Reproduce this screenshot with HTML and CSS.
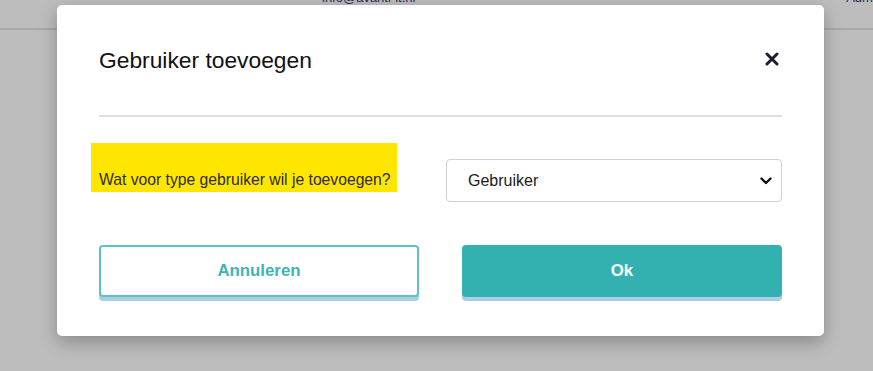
FILE: index.html
```html
<!DOCTYPE html>
<html>
<head>
    <title>Gebruiker toevoegen</title>
    <meta charset="utf-8" />
    <link rel="stylesheet" href="styles.css">
</head>
<body>
    <div class="topbar">
        <span class="topbar-mail">info@avanti-it.nl</span>
        <span class="topbar-role">Admin</span>
    </div>

    <div class="modal">
        <div class="modal-head">
            <h2 class="modal-title">Gebruiker toevoegen</h2>
            <button class="closebtn" type="button">
                <svg width="14" height="14" viewBox="0 0 14 14">
                    <path d="M2 2 L12 12 M12 2 L2 12" stroke="#1b1c36" stroke-width="3" stroke-linecap="round" fill="none"/>
                </svg>
            </button>
        </div>
        <div class="divider"></div>

        <div class="row">
            <label class="question" for="typesel">Wat voor type gebruiker wil je toevoegen?</label>
            <div class="selectwrap">
                <select id="typesel" class="typeselect">
                    <option>Gebruiker</option>
                    <option>Beheerder</option>
                </select>
                <svg class="chevron" width="12" height="8" viewBox="0 0 12 8">
                    <path d="M1.5 1.5 L6 6 L10.5 1.5" stroke="#111" stroke-width="2.4" fill="none" stroke-linecap="round" stroke-linejoin="round"/>
                </svg>
            </div>
        </div>

        <div class="actions">
            <button class="btn btn-cancel" type="button">Annuleren</button>
            <button class="btn btn-ok" type="button">Ok</button>
        </div>
    </div>
</body>
</html>
```

FILE: styles.css
```css
html, body {
    padding: 0px;
    margin: 0px;
}

body {
    background-color: #bdbdbd;
    height: 100vh;
    overflow: hidden;
    font-family: "Liberation Sans", Arial, sans-serif;
    position: relative;
}

.topbar {
    height: 28px;
    border-bottom: 2px solid #a9a9a9;
    display: flex;
    align-items: flex-start;
    overflow: hidden;
}

.topbar span {
    font-size: 13px;
    color: #2b2b55;
    margin-top: -10px;
}

.topbar-mail {
    margin-left: 322px;
}

.topbar-role {
    margin-left: auto;
    margin-right: -10px;
}

.modal {
    position: absolute;
    top: 5px;
    left: 57px;
    width: 767px;
    height: 331px;
    box-sizing: border-box;
    background-color: white;
    border-radius: 5px;
    box-shadow: 0px 6px 18px rgba(0,0,0,0.28);
    padding: 0 42px 0 42px;
}

.modal-head {
    height: 110px;
    display: flex;
    align-items: center;
    justify-content: space-between;
}

.modal-title {
    margin: 0;
    font-size: 22.8px;
    font-weight: normal;
    color: #111;
    padding-top: 1px;
}

.closebtn {
    border: none;
    background: none;
    padding: 0;
    margin-right: 3px;
    margin-top: -2px;
    display: flex;
}

.divider {
    height: 2px;
    background-color: #dedede;
}

.row {
    display: flex;
    justify-content: space-between;
    align-items: flex-start;
    margin-top: 26px;
}

.question {
    display: block;
    background-color: #ffe600;
    margin-left: -8px;
    width: 306px;
    height: 49px;
    box-sizing: border-box;
    padding: 28px 0 0 8px;
    font-size: 15.7px;
    color: #2d2d2d;
}

.selectwrap {
    position: relative;
    margin-top: 16px;
}

.typeselect {
    appearance: none;
    -webkit-appearance: none;
    width: 336px;
    height: 43px;
    border: 1px solid #d0d0d0;
    border-radius: 4px;
    background-color: white;
    padding: 0 0 0 21px;
    font-family: "Liberation Sans", Arial, sans-serif;
    font-size: 16px;
    color: #1a1a1a;
}

.chevron {
    position: absolute;
    right: 10px;
    top: 18px;
    pointer-events: none;
}

.actions {
    display: flex;
    justify-content: space-between;
    margin-top: 43px;
}

.btn {
    width: 320px;
    height: 52px;
    border-radius: 4px;
    font-family: "Liberation Sans", Arial, sans-serif;
    font-size: 16.8px;
    font-weight: bold;
    box-shadow: 0px 4px 0px #a9cde3;
}

.btn-cancel {
    background-color: white;
    border: 2px solid #5cc3c3;
    color: #3cb5b5;
}

.btn-ok {
    background-color: #33b1b0;
    border: none;
    color: white;
}
```
